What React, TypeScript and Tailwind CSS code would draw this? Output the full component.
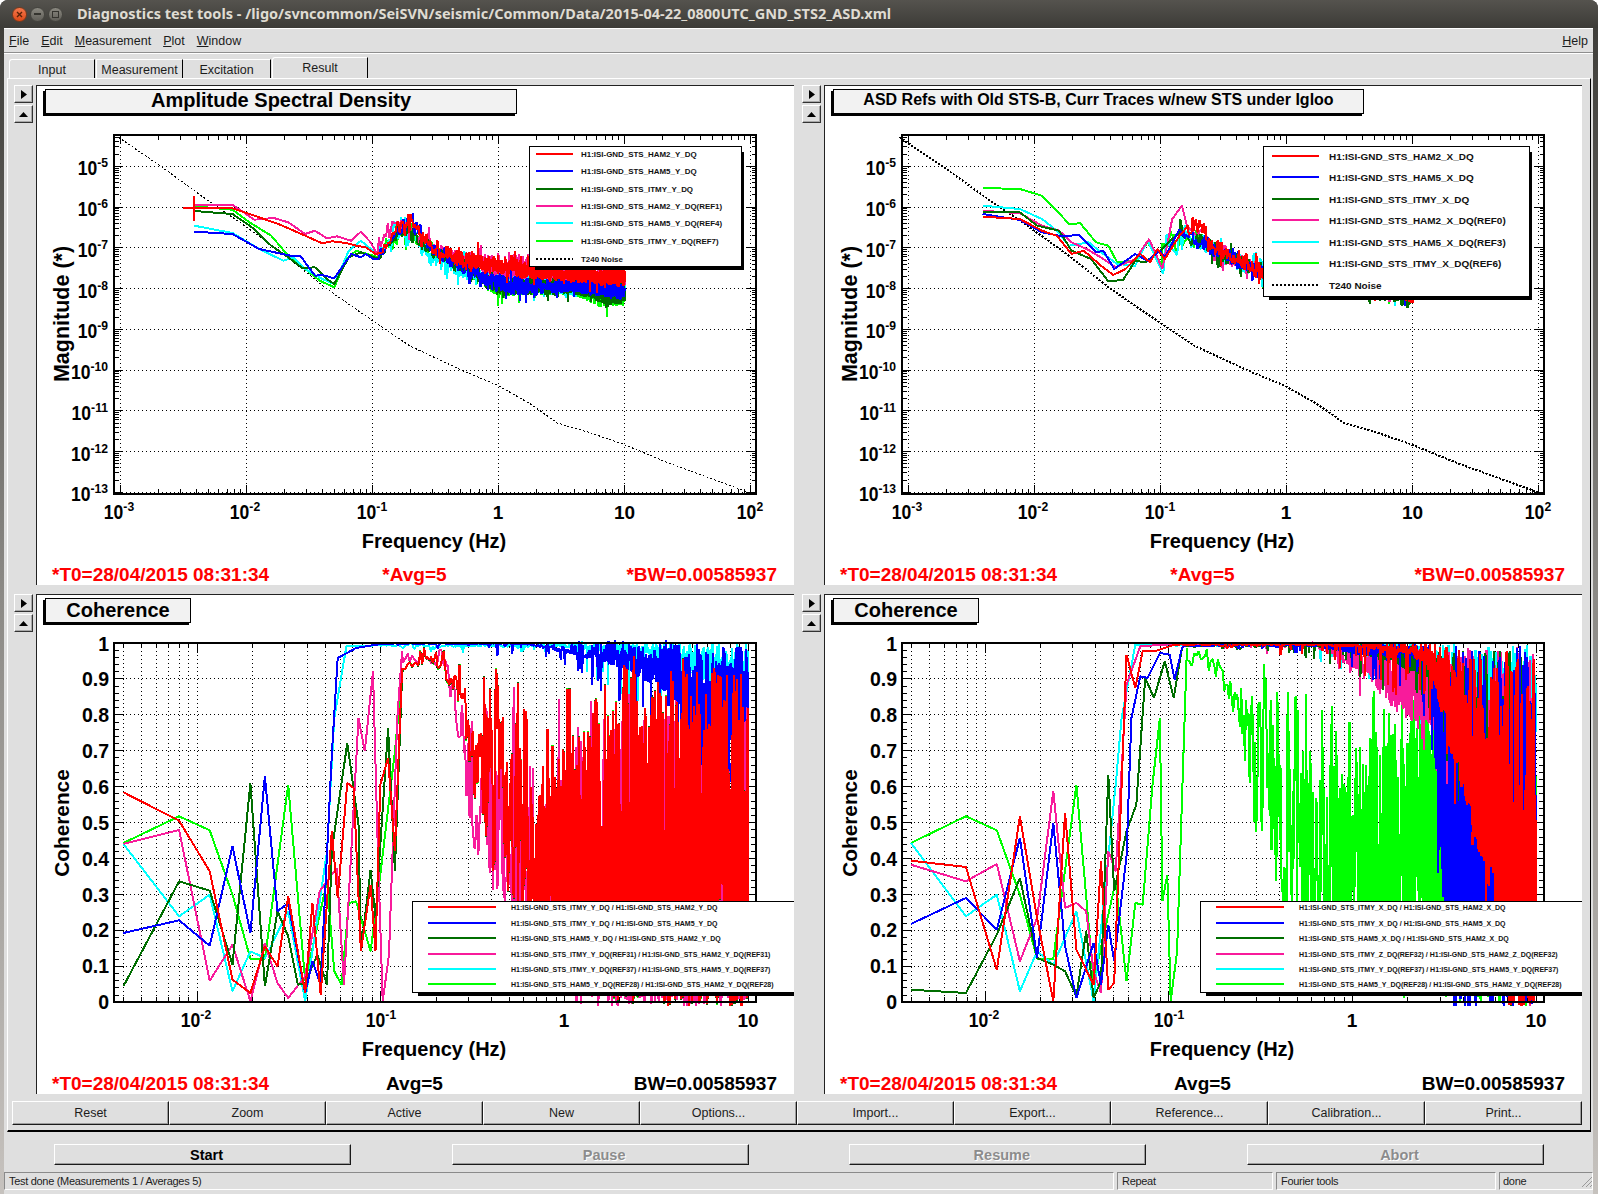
import { ReactNode } from "react"

type Pt = [number, number]

const RED = "#ff0000"
const BLUE = "#0000ff"
const DARK = "#006e00"
const PINK = "#f81b9b"
const CYAN = "#00ffff"
const LIME = "#00ff00"

function rng(seed: number) {
  let a = seed
  return () => {
    a = (a + 0x6d2b79f5) | 0
    let t = Math.imul(a ^ (a >>> 15), 1 | a)
    t = (t + Math.imul(t ^ (t >>> 7), 61 | t)) ^ t
    return ((t ^ (t >>> 14)) >>> 0) / 4294967296
  }
}

function interp(table: Pt[], x: number) {
  if (x <= table[0][0]) return table[0][1]
  for (let i = 1; i < table.length; i++) {
    if (x <= table[i][0]) {
      const [x0, y0] = table[i - 1]
      const [x1, y1] = table[i]
      return y0 + ((y1 - y0) * (x - x0)) / (x1 - x0)
    }
  }
  return table[table.length - 1][1]
}

interface Trace {
  color: string
  low: Pt[]
  top: Pt[]
  bot: Pt[]
  k: number
  seed?: number
}

// traces are written in "plot units": x and y as read off the plot, mapped to the canvas below
function tracePoints(
  t: Trace,
  seed: number,
  spike: number,
  fx: (lf: number) => number,
  sx: (x: number) => number,
  sy: (y: number) => number,
) {
  const r = rng(t.seed ?? seed)
  const pts: Pt[] = [...t.low]
  const start = t.low[t.low.length - 1][0]
  let bucket = -1
  let a = 0
  let b = 0
  for (let n = 1; n <= 2500; n++) {
    const f = n * 0.004
    const x = fx(Math.log10(f))
    const draws = [r(), r(), r(), r(), r()]
    if (x <= start) continue
    const cur = Math.floor(x / 4)
    if (cur !== bucket) {
      bucket = cur
      a = draws[0]
      b = draws[1]
    }
    const hi0 = interp(t.top, x)
    const lo0 = interp(t.bot, x)
    const span = lo0 - hi0
    const hi = hi0 + span * a * a * 0.45
    const lo = lo0 - span * b * b * b * 0.35
    let y = lo - (lo - hi) * Math.pow(draws[2], t.k)
    if (draws[3] < 0.12 / (f + 0.5)) {
      y += spike > 100 ? draws[4] * draws[4] * spike * Math.min(1, f / 4) : (draws[4] - 0.5) * spike
    }
    pts.push([x, spike > 100 ? Math.min(y, 1165) : y])
  }
  return pts.map(([x, y]) => `${sx(x).toFixed(1)},${sy(y).toFixed(1)}`).join(" ")
}

// top left, amplitude
const asdLeft: Trace[] = [
  { color: LIME, k: 1.1, low: [[316, 262], [395, 272], [430, 310], [475, 350], [510, 410], [545, 450], [575, 485], [605, 505], [630, 420], [650, 395], [697, 415]], top: [[700, 400], [760, 300], [800, 360], [850, 400], [900, 440], [944, 465], [1000, 470], [1204, 490]], bot: [[700, 420], [735, 350], [800, 410], [850, 455], [900, 495], [944, 540], [1000, 530], [1100, 530], [1170, 575], [1204, 555]] },
  { color: CYAN, k: 1.1, low: [[316, 320], [395, 342], [450, 390], [500, 425], [520, 415], [545, 450], [580, 480], [605, 495], [635, 395], [660, 365], [697, 410]], top: [[700, 350], [735, 262], [770, 320], [800, 370], [850, 400], [900, 430], [1204, 480]], bot: [[700, 430], [770, 380], [800, 435], [830, 468], [900, 490], [944, 520], [1204, 540]] },
  { color: PINK, k: 1.1, low: [[316, 257], [395, 257], [440, 302], [480, 297], [510, 310], [545, 345], [565, 335], [590, 358], [610, 352], [640, 365], [660, 338], [680, 370], [695, 410]], top: [[700, 340], [735, 262], [760, 290], [800, 340], [850, 385], [900, 400], [1000, 400], [1100, 430], [1204, 450]], bot: [[700, 400], [735, 340], [770, 370], [800, 400], [850, 450], [900, 470], [944, 480], [1100, 490], [1204, 500]] },
  { color: DARK, k: 1.1, low: [[316, 276], [395, 285], [435, 325], [475, 380], [510, 415], [540, 448], [565, 445], [590, 480], [605, 495], [635, 415], [660, 400], [697, 420]], top: [[700, 400], [760, 300], [800, 360], [850, 400], [900, 440], [944, 465], [1204, 490]], bot: [[700, 420], [735, 350], [800, 410], [850, 450], [900, 490], [944, 530], [1100, 525], [1170, 560], [1204, 555]] },
  { color: BLUE, k: 1.1, low: [[316, 338], [395, 345], [450, 390], [520, 412], [535, 410], [565, 470], [580, 468], [605, 478], [640, 405], [660, 415], [670, 405], [685, 420], [697, 420]], top: [[700, 400], [760, 265], [800, 360], [850, 400], [900, 440], [944, 460], [1000, 470], [1100, 480], [1204, 490]], bot: [[700, 420], [735, 350], [770, 360], [800, 410], [850, 450], [900, 490], [944, 525], [1000, 530], [1100, 520], [1204, 545]] },
  { color: RED, k: 1.1, low: [[292, 268], [316, 268], [316, 232], [316, 305], [316, 266], [395, 268], [440, 290], [490, 315], [545, 350], [580, 373], [600, 367], [630, 372], [650, 380], [670, 385], [690, 405], [705, 400]], top: [[705, 380], [735, 310], [760, 270], [800, 345], [850, 385], [900, 395], [944, 415], [1000, 405], [1100, 440], [1204, 450]], bot: [[705, 410], [735, 340], [770, 350], [800, 400], [850, 440], [900, 460], [944, 470], [1000, 480], [1100, 490], [1204, 505]] },
]

// top right, amplitude
const asdRight: Trace[] = [
  { color: LIME, k: 1.1, low: [[329, 207], [405, 210], [450, 230], [480, 275], [505, 315], [528, 313], [560, 370], [585, 380], [603, 430], [640, 425], [665, 370], [695, 440]], top: [[700, 350], [735, 300], [800, 360], [850, 400], [1204, 500]], bot: [[700, 420], [770, 370], [800, 420], [850, 450], [900, 480], [1204, 540]] },
  { color: CYAN, k: 1.1, low: [[329, 260], [405, 270], [450, 300], [480, 335], [505, 380], [545, 370], [570, 400], [603, 435], [640, 440], [665, 365], [697, 465]], top: [[700, 350], [735, 300], [800, 360], [850, 400], [1204, 500]], bot: [[700, 430], [770, 380], [800, 430], [850, 460], [900, 480], [1204, 540]] },
  { color: PINK, k: 1.1, low: [[329, 275], [405, 283], [450, 320], [485, 335], [510, 370], [545, 393], [575, 420], [600, 445], [640, 420], [668, 360], [695, 450], [715, 300], [735, 260], [745, 320], [765, 350], [780, 320]], top: [[780, 320], [800, 360], [850, 400], [900, 430], [1204, 500]], bot: [[780, 370], [800, 430], [850, 450], [900, 480], [1204, 540]] },
  { color: DARK, k: 1.1, low: [[329, 278], [405, 280], [440, 320], [485, 335], [510, 395], [550, 420], [585, 487], [615, 483], [640, 425], [660, 430], [690, 395], [730, 340]], top: [[730, 320], [800, 360], [850, 400], [900, 440], [1204, 500]], bot: [[730, 350], [800, 420], [850, 450], [900, 480], [1170, 545], [1192, 572], [1204, 550]] },
  { color: BLUE, k: 1.1, low: [[329, 285], [405, 303], [450, 340], [490, 352], [525, 348], [560, 400], [575, 395], [597, 450], [640, 405], [665, 425], [690, 395], [700, 415], [730, 330]], top: [[730, 320], [800, 360], [850, 400], [900, 440], [1204, 500]], bot: [[730, 350], [800, 420], [850, 450], [900, 475], [1204, 540]] },
  { color: RED, k: 1.1, low: [[329, 293], [405, 300], [450, 335], [480, 350], [510, 405], [535, 395], [570, 440], [595, 468], [620, 450], [650, 405], [670, 430], [685, 390], [700, 420], [730, 350], [745, 325]], top: [[745, 310], [765, 272], [800, 350], [850, 400], [900, 430], [1204, 500]], bot: [[745, 350], [770, 340], [800, 420], [850, 440], [890, 485], [1180, 540], [1204, 553]] },
]

const redTop: Pt[] = [[745, 140], [800, 78], [830, 85], [860, 130], [900, 130], [1000, 190], [1100, 170], [1200, 130], [1240, 90], [1300, 90], [1360, 120], [1460, 170]]
const redBot: Pt[] = [[745, 175], [800, 130], [830, 170], [860, 250], [890, 480], [920, 750], [1000, 980], [1100, 1100], [1200, 1160], [1460, 1160]]
const shift = (t: Pt[], d: number) => t.map(([x, y]) => [x, y + d] as Pt)

// bottom left, coherence
const cohLeft: Trace[] = [
  { color: LIME, k: 1.4, seed: 900, low: [[170, 675], [285, 595], [348, 637], [395, 830], [432, 1022], [462, 1022], [510, 500], [545, 1090], [590, 790], [605, 1060], [620, 1100], [635, 855], [650, 850], [680, 1000], [700, 770], [730, 400], [745, 170]], top: shift(redTop, -3), bot: shift(redBot, 4) },
  { color: CYAN, k: 3, low: [[170, 678], [285, 895], [348, 830], [395, 1120], [432, 1000], [462, 1020], [510, 880], [545, 1150], [590, 700], [605, 300], [630, 85], [700, 82]], top: [[700, 76], [1100, 70], [1460, 72]], bot: [[700, 85], [1100, 88], [1300, 130], [1460, 260]] },
  { color: PINK, k: 1.8, low: [[170, 678], [285, 636], [348, 1088], [395, 980], [432, 1150], [462, 975], [488, 1095], [510, 1140], [545, 1075], [575, 820], [610, 750], [625, 1100], [655, 300], [668, 400], [685, 160], [695, 700], [705, 1150], [718, 1010], [735, 300], [745, 100]], top: [[745, 95], [800, 78], [830, 85], [860, 130], [1000, 170], [1140, 190], [1460, 170]], bot: [[745, 140], [800, 125], [830, 170], [860, 350], [885, 680], [920, 800], [1000, 1000], [1100, 1160], [1460, 1160]] },
  { color: DARK, k: 1.4, seed: 900, low: [[170, 1105], [285, 790], [348, 818], [395, 1040], [432, 495], [462, 1105], [488, 880], [510, 955], [530, 1100], [545, 1095], [570, 1010], [590, 1100], [600, 700], [632, 375], [655, 620], [660, 1000], [680, 755], [690, 900], [716, 330], [730, 760], [745, 170]], top: shift(redTop, -2), bot: shift(redBot, 3) },
  { color: BLUE, k: 3, low: [[170, 945], [285, 907], [348, 983], [395, 685], [432, 945], [462, 475], [488, 880], [510, 855], [545, 1125], [560, 1030], [577, 1100], [600, 410], [612, 120], [650, 90], [690, 80], [720, 77]], top: [[720, 74], [1100, 70], [1240, 55], [1460, 85]], bot: [[720, 78], [1000, 80], [1100, 110], [1200, 150], [1300, 230], [1380, 380], [1460, 320]] },
  { color: RED, k: 1.4, seed: 900, low: [[170, 523], [285, 608], [348, 760], [395, 1085], [432, 1125], [462, 985], [488, 1045], [510, 835], [545, 1125], [560, 855], [577, 1130], [600, 640], [612, 840], [632, 495], [645, 510], [660, 1000], [680, 800], [690, 1000], [700, 500], [716, 420], [730, 700], [745, 150]], top: redTop, bot: redBot },
]

// bottom right, coherence
const cohRight: Trace[] = [
  { color: LIME, k: 1, low: [[183, 675], [295, 595], [358, 637], [405, 830], [440, 1022], [473, 1022], [520, 500], [555, 1090], [600, 790], [622, 1090], [640, 855], [655, 860], [675, 500], [690, 300], [695, 850], [705, 770], [712, 1150], [725, 1000], [745, 90]], top: [[745, 85], [800, 82], [850, 170], [900, 130], [950, 150], [1000, 180], [1100, 180], [1230, 150], [1460, 180]], bot: [[745, 150], [800, 170], [850, 340], [885, 680], [920, 800], [960, 1000], [1000, 1160], [1460, 1160]] },
  { color: CYAN, k: 3, low: [[183, 675], [295, 895], [358, 830], [405, 1120], [440, 1000], [473, 1040], [520, 880], [555, 1150], [600, 500], [612, 300], [640, 80], [700, 78]], top: [[700, 76], [1100, 70], [1460, 80]], bot: [[700, 80], [1000, 80], [1200, 100], [1300, 260], [1460, 360]] },
  { color: PINK, k: 1.5, low: [[183, 740], [295, 790], [358, 738], [405, 1030], [440, 900], [473, 520], [497, 870], [520, 855], [540, 880], [555, 1060], [570, 1125], [585, 700], [600, 760], [622, 200], [650, 85], [720, 78]], top: [[720, 76], [1100, 70], [1460, 85]], bot: [[720, 80], [1000, 82], [1060, 130], [1120, 190], [1170, 290], [1240, 330], [1300, 700], [1400, 900], [1460, 1160]] },
  { color: DARK, k: 2.4, low: [[183, 1115], [295, 1125], [358, 950], [405, 780], [440, 1020], [473, 1040], [497, 1060], [520, 1135], [540, 940], [555, 1140], [570, 1090], [585, 470], [597, 820], [622, 640], [642, 560], [660, 180], [678, 240], [700, 130], [718, 240], [735, 90]], top: [[735, 78], [1100, 72], [1460, 85]], bot: [[735, 85], [1000, 85], [1100, 105], [1240, 180], [1340, 900], [1460, 1160]] },
  { color: BLUE, k: 1.5, low: [[183, 918], [295, 840], [358, 935], [405, 660], [440, 1020], [473, 615], [497, 985], [520, 1140], [555, 975], [570, 1100], [585, 920], [597, 1030], [622, 715], [632, 300], [650, 175], [665, 180], [690, 105], [710, 110], [720, 185], [735, 90]], top: [[735, 78], [1100, 70], [1460, 80]], bot: [[735, 85], [1000, 85], [1080, 110], [1180, 120], [1235, 130], [1245, 300], [1270, 1000], [1285, 1160], [1460, 1160]] },
  { color: RED, k: 2, low: [[183, 728], [295, 747], [358, 1055], [405, 595], [440, 900], [473, 1150], [497, 585], [520, 995], [555, 1100], [570, 730], [585, 1115], [597, 1095], [622, 110], [640, 210], [655, 100], [680, 100], [720, 80]], top: [[720, 76], [1100, 72], [1300, 70], [1400, 90], [1460, 110]], bot: [[720, 82], [1000, 82], [1100, 88], [1200, 110], [1240, 150], [1290, 450], [1340, 700], [1390, 1000], [1400, 1160], [1460, 1160]] },
]

const noise = "160,55 250,145 340,240 420,320 500,405 590,510 684,605 760,680 870,755 944,800 1010,855 1065,912 1130,940 1200,975 1300,1035 1460,1120"
  .split(" ")
  .map((p) => p.split(",").map(Number) as Pt)

interface LegendRow {
  color: string
  label: string
  dashed?: boolean
}

interface LegendProps {
  x: number
  y: number
  w: number
  h: number
  lineX: Pt
  textX: number
  rows: LegendRow[]
  rowY: number[]
  size: number
}

function Legend({ x, y, w, h, lineX, textX, rows, rowY, size }: LegendProps) {
  return (
    <g>
      <rect x={x + 6} y={y + 6} width={w - 3} height={h - 2} fill="#000" />
      <rect x={x} y={y} width={w} height={h} fill="#fff" stroke="#000" strokeWidth={1} />
      {rows.map((r, i) => (
        <g key={i}>
          <line
            x1={lineX[0]}
            x2={lineX[1]}
            y1={rowY[i]}
            y2={rowY[i]}
            stroke={r.color}
            strokeWidth={r.dashed ? 1.4 : 2}
            strokeDasharray={r.dashed ? "2 2" : undefined}
          />
          <text x={textX} y={rowY[i] + size * 0.4} fontSize={size} fontWeight={700} fill="#111">
            {r.label}
          </text>
        </g>
      ))}
    </g>
  )
}

// ROOT's tick labels are taller than they are wide, hence the squeeze
function Power({ x, y, exp, anchor }: { x: number; y: number; exp: string; anchor: "end" | "middle" }) {
  return (
    <text transform={`translate(${x} ${y}) scale(0.9 1)`} fontSize={19.5} fontWeight={700} textAnchor={anchor}>
      10
      <tspan dy={-8} fontSize={13.5}>
        {exp}
      </tspan>
    </text>
  )
}

const trio = [1, 2, 3, 4, 5, 6, 7, 8, 9]

function AsdPlot({ traces, seed, right, legend, thickNoise }: { traces: Trace[]; seed: number; right?: boolean; legend: ReactNode; thickNoise?: boolean }) {
  const fx = (lf: number) => 497.6 + 126 * lf
  const fy = (e: number) => 493.3 - 40.75 * (e + 13)
  const [L, R, T, B] = [113, 755, 136, 495]
  const sx = right ? (x: number) => 32 + x / 2.036 : (x: number) => 40 + x / 2.063
  const sy = (y: number) => 120 + y / 3
  const zoomF = right ? (lf: number) => 948 + 257 * lf : (lf: number) => 944 + 260 * lf
  let ticks = ""
  for (let e = -4; e <= 1; e++) {
    for (const m of trio) {
      const x = fx(e + Math.log10(m))
      if (x < L || x > R) continue
      const len = m === 1 ? 9 : 5
      ticks += `M${x} ${B}v${-len}M${x} ${T}v${len}`
    }
  }
  const x100 = fx(2)
  ticks += `M${x100} ${B}v-9M${x100} ${T}v9`
  for (let e = -14; e <= -5; e++) {
    for (const m of trio) {
      const y = fy(e + Math.log10(m))
      if (y < T || y > B) continue
      const len = m === 1 ? 9 : 4.5
      ticks += `M${L} ${y}h${len}M${R} ${y}h${-len}`
    }
  }
  const xGrid = [-3, -2, -1, 0, 1, 2]
  const yExp = [-5, -6, -7, -8, -9, -10, -11, -12, -13]
  return (
    <svg width={758} height={445} viewBox="36 115 758 445" shapeRendering="crispEdges" className="block shrink-0">
      {xGrid.map((e) => (
        <line key={e} x1={fx(e)} x2={fx(e)} y1={T} y2={B} stroke="#000" strokeWidth={1} strokeDasharray="1 3" />
      ))}
      {yExp.map((e) => (
        <line key={e} x1={L} x2={R} y1={fy(e)} y2={fy(e)} stroke="#000" strokeWidth={1} strokeDasharray="1 3" />
      ))}
      <path d={ticks} stroke="#000" strokeWidth={1} fill="none" />
      <polyline
        points={noise.map(([x, y]) => `${sx(x).toFixed(1)},${sy(y).toFixed(1)}`).join(" ")}
        fill="none"
        stroke="#000"
        strokeWidth={thickNoise ? 2 : 1}
        strokeDasharray={thickNoise ? "2 1.6" : "2 2"}
      />
      {traces.map((t, i) => (
        <polyline key={i} points={tracePoints(t, seed + i, 70, zoomF, sx, sy)} fill="none" stroke={t.color} strokeWidth={2} strokeLinejoin="bevel" />
      ))}
      <rect x={L} y={T} width={R - L} height={B - T} fill="none" stroke="#000" strokeWidth={1.5} />
      {yExp.map((e) => (
        <Power key={e} x={107} y={fy(e) + 9} exp={String(e)} anchor="end" />
      ))}
      <Power x={118} y={520} exp="-3" anchor="middle" />
      <Power x={244} y={520} exp="-2" anchor="middle" />
      <Power x={371} y={520} exp="-1" anchor="middle" />
      <text x={497} y={520} fontSize={19} fontWeight={700} textAnchor="middle">1</text>
      <text x={623.6} y={520} fontSize={19} fontWeight={700} textAnchor="middle">10</text>
      <Power x={749} y={520} exp="2" anchor="middle" />
      <text x={433} y={548.5} fontSize={20} fontWeight={700} textAnchor="middle">Frequency (Hz)</text>
      <text transform="translate(67.5 315) rotate(-90)" fontSize={21.5} fontWeight={700} textAnchor="middle">Magnitude (*)</text>
      {legend}
    </svg>
  )
}

function CohPlot({ traces, seed, right, legend }: { traces: Trace[]; seed: number; right?: boolean; legend: ReactNode }) {
  const fx = (lf: number) => 563.5 + 183.7 * lf
  const fy = (c: number) => 1004.3 - 359.3 * c
  const [L, R, T, B] = [113, 755, 645, 1004]
  const sx = right ? (x: number) => 32 + x / 2.036 : (x: number) => 40 + x / 2.063
  const sy = (y: number) => 620 + y / 3
  const zoomF = right ? (lf: number) => 1080 + 375 * lf : (lf: number) => 1080 + 379 * lf
  let ticks = ""
  const xs: number[] = []
  for (let e = -3; e <= 1; e++) {
    for (const m of trio) {
      const x = fx(e + Math.log10(m))
      if (x < L || x > R) continue
      xs.push(x)
      const len = m === 1 ? 10 : 5
      ticks += `M${x} ${B}v${-len}M${x} ${T}v${len}`
    }
  }
  const ys: number[] = []
  for (let i = 0; i <= 50; i++) {
    const y = fy(i * 0.02)
    const major = i % 5 === 0
    if (major) ys.push(y)
    const len = major ? 10 : 5
    ticks += `M${L} ${y}h${len}M${R} ${y}h${-len}`
  }
  const labels = ["1", "0.9", "0.8", "0.7", "0.6", "0.5", "0.4", "0.3", "0.2", "0.1", "0"]
  return (
    <svg width={758} height={445} viewBox="36 625 758 445" shapeRendering="crispEdges" className="block shrink-0">
      {xs.map((x) => (
        <line key={x} x1={x} x2={x} y1={T} y2={B} stroke="#000" strokeWidth={1} strokeDasharray="1 3" />
      ))}
      {ys.map((y) => (
        <line key={y} x1={L} x2={R} y1={y} y2={y} stroke="#000" strokeWidth={1} strokeDasharray="1 3" />
      ))}
      <path d={ticks} stroke="#000" strokeWidth={1} fill="none" />
      {traces.map((t, i) => (
        <polyline key={i} points={tracePoints(t, seed + i, 320, zoomF, sx, sy)} fill="none" stroke={t.color} strokeWidth={2} strokeLinejoin="bevel" />
      ))}
      <rect x={L} y={T} width={R - L} height={B - T} fill="none" stroke="#000" strokeWidth={1.5} />
      {labels.map((l, i) => (
        <text key={l} x={108} y={fy(1 - i * 0.1) + (i === 0 ? 8 : 7)} fontSize={19.5} fontWeight={700} textAnchor="end">
          {l}
        </text>
      ))}
      <Power x={195} y={1029} exp="-2" anchor="middle" />
      <Power x={380} y={1029} exp="-1" anchor="middle" />
      <text x={563} y={1029} fontSize={19} fontWeight={700} textAnchor="middle">1</text>
      <text x={747} y={1029} fontSize={19} fontWeight={700} textAnchor="middle">10</text>
      <text x={433} y={1057.5} fontSize={20} fontWeight={700} textAnchor="middle">Frequency (Hz)</text>
      <text transform="translate(67.5 825) rotate(-90)" fontSize={20.8} fontWeight={700} textAnchor="middle">Coherence</text>
      {legend}
    </svg>
  )
}

function legendRows(axis: string, refs: [string, string, string]): LegendRow[] {
  return [
    { color: RED, label: `H1:ISI-GND_STS_HAM2_${axis}_DQ` },
    { color: BLUE, label: `H1:ISI-GND_STS_HAM5_${axis}_DQ` },
    { color: DARK, label: `H1:ISI-GND_STS_ITMY_${axis}_DQ` },
    { color: PINK, label: `H1:ISI-GND_STS_HAM2_${axis}_DQ(${refs[0]})` },
    { color: CYAN, label: `H1:ISI-GND_STS_HAM5_${axis}_DQ(${refs[1]})` },
    { color: LIME, label: `H1:ISI-GND_STS_ITMY_${axis}_DQ(${refs[2]})` },
    { color: "#000", label: "T240 Noise", dashed: true },
  ]
}

function cohRows(axis: string, pink: string, ref: string): LegendRow[] {
  return [
    { color: RED, label: `H1:ISI-GND_STS_ITMY_${axis}_DQ / H1:ISI-GND_STS_HAM2_${axis}_DQ` },
    { color: BLUE, label: `H1:ISI-GND_STS_ITMY_${axis}_DQ / H1:ISI-GND_STS_HAM5_${axis}_DQ` },
    { color: DARK, label: `H1:ISI-GND_STS_HAM5_${axis}_DQ / H1:ISI-GND_STS_HAM2_${axis}_DQ` },
    { color: PINK, label: `H1:ISI-GND_STS_ITMY_${pink}_DQ(${ref}) / H1:ISI-GND_STS_HAM2_${pink}_DQ(${ref})` },
    { color: CYAN, label: "H1:ISI-GND_STS_ITMY_Y_DQ(REF37) / H1:ISI-GND_STS_HAM5_Y_DQ(REF37)" },
    { color: LIME, label: "H1:ISI-GND_STS_HAM5_Y_DQ(REF28) / H1:ISI-GND_STS_HAM2_Y_DQ(REF28)" },
  ]
}

const cohRowY = [909, 925, 940, 956, 971, 986]

function TitleBox({ width, size, children }: { width: string; size: string; children: ReactNode }) {
  return (
    <div className={`${width} ${size} ml-[8px] h-[25px] shrink-0 border border-black bg-[#f2f2f2] text-center font-bold text-black shadow-[-2px_2px_0_#000]`}>
      {children}
    </div>
  )
}

function Stats({ starred }: { starred?: boolean }) {
  return (
    <div className="grid flex-1 grid-cols-3 items-center pt-[2px] pr-[17px] pl-[15px] text-[19px] font-bold">
      <span className="text-[#ff0000]">*T0=28/04/2015 08:31:34</span>
      <span className={`text-center ${starred ? "text-[#ff0000]" : "text-black"}`}>{starred ? "*Avg=5" : "Avg=5"}</span>
      <span className={`text-right ${starred ? "text-[#ff0000]" : "text-black"}`}>{starred ? "*BW=0.00585937" : "BW=0.00585937"}</span>
    </div>
  )
}

function Bevel({ children }: { children: ReactNode }) {
  return (
    <button className="flex h-[18px] w-[19px] items-center justify-center border border-t-white border-r-[#333] border-b-[#333] border-l-white shadow-[inset_-1px_-1px_0_#a8a8a8]">
      {children}
    </button>
  )
}

function Pad({ children }: { children: ReactNode }) {
  return (
    <div className="flex h-[500px] gap-[3px]">
      <div className="flex w-[19px] flex-col gap-[2px]">
        <Bevel>
          <svg width="6" height="9" viewBox="0 0 6 9">
            <path d="M0 0L6 4.5L0 9Z" fill="#000" />
          </svg>
        </Bevel>
        <Bevel>
          <svg width="9" height="5" viewBox="0 0 9 5">
            <path d="M0 5L4.5 0L9 5Z" fill="#000" />
          </svg>
        </Bevel>
      </div>
      <div className="flex h-[500px] w-[758px] flex-col overflow-hidden border-t border-l border-t-[#222] border-l-[#222] bg-white pt-[3px]">{children}</div>
    </div>
  )
}

function MenuItem({ first, rest }: { first: string; rest: string }) {
  return (
    <span>
      <span className="underline">{first}</span>
      {rest}
    </span>
  )
}

const toolbar = ["Reset", "Zoom", "Active", "New", "Options...", "Import...", "Export...", "Reference...", "Calibration...", "Print..."]
const raised = "border border-t-white border-l-white border-r-[#1a1a1a] border-b-[#1a1a1a] shadow-[inset_-1px_-1px_0_#9c9c9c]"
const sunken = "border border-t-[#8a8a8a] border-l-[#8a8a8a] border-r-white border-b-white"

export default function App() {
  return (
    <div className="h-[1194px] w-[1598px] overflow-hidden bg-white font-['Liberation_Sans'] text-[12.5px] text-[#1c1c1c]">
      <div className="flex h-full flex-col rounded-t-[8px] bg-gradient-to-b from-[#3c3b37] via-[#8c8a86] to-[#c6c2be] pr-[5px] pl-[4px]">
        <div className="-mr-[5px] -ml-[4px] flex h-[28px] shrink-0 items-center rounded-t-[8px] bg-gradient-to-b from-[#55534e] to-[#3c3b37] pl-[12px]">
          <div className="flex items-center gap-[3px]">
            <div className="flex h-[15px] w-[15px] items-center justify-center rounded-full border border-[#7a3a1c] bg-gradient-to-b from-[#f5774a] to-[#dd4814]">
              <svg width="7" height="7" viewBox="0 0 7 7">
                <path d="M1 1L6 6M6 1L1 6" stroke="#5a2208" strokeWidth="1.4" />
              </svg>
            </div>
            <div className="flex h-[15px] w-[15px] items-center justify-center rounded-full border border-[#45443f] bg-gradient-to-b from-[#8a8880] to-[#605e58]">
              <div className="h-[1.5px] w-[7px] bg-[#35342f]" />
            </div>
            <div className="flex h-[15px] w-[15px] items-center justify-center rounded-full border border-[#45443f] bg-gradient-to-b from-[#8a8880] to-[#605e58]">
              <div className="h-[7px] w-[7px] border border-[#35342f]" />
            </div>
          </div>
          <span className="ml-[14px] font-['Noto_Sans'] text-[14.5px] font-bold whitespace-nowrap text-[#dfdbd2]">
            Diagnostics test tools - /ligo/svncommon/SeiSVN/seismic/Common/Data/2015-04-22_0800UTC_GND_STS2_ASD.xml
          </span>
        </div>

        <div className="flex flex-1 flex-col bg-[#dfdfdf]">
          <div className="flex h-[24px] shrink-0 items-center justify-between border-t border-t-white pt-[2px] pr-[5px] pl-[5px]">
            <div className="flex gap-[12px]">
              <MenuItem first="F" rest="ile" />
              <MenuItem first="E" rest="dit" />
              <MenuItem first="M" rest="easurement" />
              <MenuItem first="P" rest="lot" />
              <MenuItem first="W" rest="indow" />
            </div>
            <MenuItem first="H" rest="elp" />
          </div>
          <div className="h-[2px] shrink-0 border-t border-t-[#8e8e8e] border-b border-b-white" />

          <div className="flex h-[24px] shrink-0 items-end pl-[5px]">
            <div className="flex h-[19px] w-[86px] items-center justify-center rounded-tl-[3px] border-t border-r border-l border-t-white border-r-black border-l-white pt-[3px]">Input</div>
            <div className="ml-[1px] flex h-[19px] w-[87px] items-center justify-center border-t border-r border-l border-t-white border-r-black border-l-white pt-[3px]">Measurement</div>
            <div className="flex h-[19px] w-[88px] items-center justify-center border-t border-r border-t-white border-r-black pt-[3px]">Excitation</div>
            <div className="ml-[1px] flex h-[21px] w-[96px] items-center justify-center rounded-tl-[3px] border-t border-r border-l border-t-white border-r-black border-l-white">Result</div>
          </div>

          <div className="mr-[2px] ml-[3px] flex h-[1054px] flex-col border-t border-b-2 border-l border-t-white border-r border-r-black border-b-black border-l-white pt-[6px] pr-[6px] pb-[5px] pl-[4px]">
            <div className="grid grid-cols-[780px_780px] gap-x-[8px] gap-y-[9px] pl-[2px]">
              <Pad>
                <TitleBox width="w-[472px]" size="text-[20px] leading-[20px]">Amplitude Spectral Density</TitleBox>
                <AsdPlot
                  traces={asdLeft}
                  seed={11}
                  legend={
                    <Legend x={528} y={147} w={212} h={120} lineX={[535, 572]} textX={580} rows={legendRows("Y", ["REF1", "REF4", "REF7"])} rowY={[155, 172, 190, 207, 224, 242, 260]} size={7.95} />
                  }
                />
                <Stats starred />
              </Pad>
              <Pad>
                <TitleBox width="w-[531px]" size="text-[16px] leading-[20px]">ASD Refs with Old STS-B, Curr Traces w/new STS under Igloo</TitleBox>
                <AsdPlot
                  traces={asdRight}
                  seed={41}
                  right
                  thickNoise
                  legend={
                    <Legend x={474} y={147} w={266} h={150} lineX={[483, 530]} textX={540} rows={legendRows("X", ["REF0", "REF3", "REF6"])} rowY={[157, 178, 200, 221, 243, 264, 286]} size={9.95} />
                  }
                />
                <Stats starred />
              </Pad>
              <Pad>
                <TitleBox width="w-[146px]" size="text-[20px] leading-[22px]">Coherence</TitleBox>
                <CohPlot
                  traces={cohLeft}
                  seed={71}
                  legend={
                    <Legend x={411} y={903} w={400} h={91} lineX={[427, 495]} textX={510} rows={cohRows("Y", "Y", "REF31")} rowY={cohRowY} size={7} />
                  }
                />
                <Stats />
              </Pad>
              <Pad>
                <TitleBox width="w-[146px]" size="text-[20px] leading-[22px]">Coherence</TitleBox>
                <CohPlot
                  traces={cohRight}
                  seed={101}
                  right
                  legend={
                    <Legend x={411} y={903} w={400} h={91} lineX={[427, 495]} textX={510} rows={cohRows("X", "Z", "REF32")} rowY={cohRowY} size={7} />
                  }
                />
                <Stats />
              </Pad>
            </div>
            <div className="mt-[7px] grid w-[1570px] grid-cols-10">
              {toolbar.map((t) => (
                <button key={t} className={`h-[24px] ${raised}`}>
                  {t}
                </button>
              ))}
            </div>
          </div>

          <div className="mt-[12px] flex shrink-0 justify-between pr-[49px] pl-[50px]">
            <button className={`h-[21px] w-[297px] pl-[8px] text-[14.5px] font-bold text-black ${raised}`}>Start</button>
            <button className={`h-[21px] w-[297px] pl-[8px] text-[14.5px] font-bold text-[#8c8c8c] [text-shadow:1px_1px_0_#fff] ${raised}`}>Pause</button>
            <button className={`h-[21px] w-[297px] pl-[8px] text-[14.5px] font-bold text-[#8c8c8c] [text-shadow:1px_1px_0_#fff] ${raised}`}>Resume</button>
            <button className={`h-[21px] w-[297px] pl-[8px] text-[14.5px] font-bold text-[#8c8c8c] [text-shadow:1px_1px_0_#fff] ${raised}`}>Abort</button>
          </div>

          <div className="mt-[7px] flex h-[18px] shrink-0 gap-[3px] text-[11px] tracking-[-0.3px]">
            <div className={`flex w-[1110px] items-center pl-[4px] ${sunken}`}>Test done (Measurements 1 / Averages 5)</div>
            <div className={`flex w-[156px] items-center pl-[4px] ${sunken}`}>Repeat</div>
            <div className={`flex w-[220px] items-center pl-[4px] ${sunken}`}>Fourier tools</div>
            <div className={`flex flex-1 items-center justify-between pl-[3px] ${sunken}`}>
              done
              <svg width="11" height="11" viewBox="0 0 11 11">
                <path d="M11 1L1 11M11 5L5 11M11 9L9 11" stroke="#9a9a9a" strokeWidth="1" />
              </svg>
            </div>
          </div>
        </div>
      </div>
    </div>
  )
}
